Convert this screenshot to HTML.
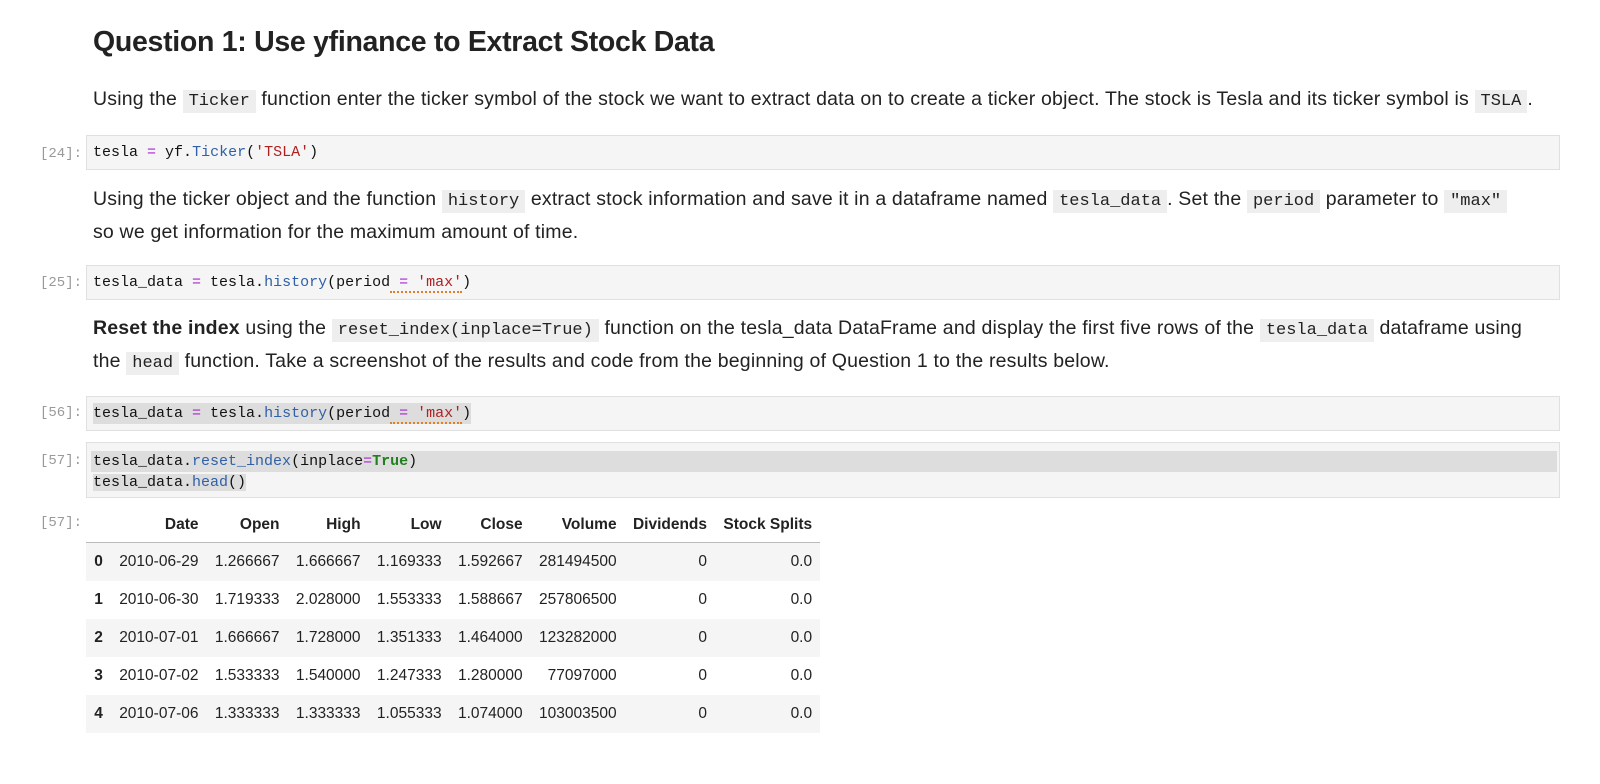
<!DOCTYPE html>
<html><head><meta charset="utf-8"><style>
body{margin:0;background:#fff;width:1600px;height:784px;overflow:hidden;font-family:"Liberation Sans",sans-serif;color:#222;}
h1{position:absolute;left:93px;top:26px;margin:0;font-size:28.5px;font-weight:bold;color:#222;letter-spacing:-0.3px}
.p{position:absolute;left:93px;font-size:19.5px;line-height:31px;white-space:nowrap;color:#222;letter-spacing:0.18px}
.c{font-family:"Liberation Mono",monospace;font-size:17px;background:#eee;padding:2px 6px;letter-spacing:0}
.cell{position:absolute;left:86px;width:1474px;background:#f5f5f5;border:1px solid #e0e0e0;box-sizing:border-box}
.code{position:absolute;left:6px;font-family:"Liberation Mono",monospace;font-size:15px;color:#111;line-height:21px;white-space:pre}
.pr{position:absolute;width:82px;text-align:right;font-family:"Liberation Mono",monospace;font-size:14px;color:#999}
.o{color:#a626d0}.f{color:#3060a8}.s{color:#b02020}.k{color:#208020;font-weight:bold}
.sq{border-bottom:2px dotted #e08020}
table{position:absolute;left:86px;top:508px;border-collapse:collapse;font-size:15.5px;color:#222}
th{font-weight:bold;text-align:right;padding:0 8.2px;height:34px;border-bottom:1px solid #bbb}
td{text-align:right;padding:0 8.2px;height:38px}
tr:nth-child(even) td{background:#f5f5f5}
td:first-child{font-weight:bold}
</style></head><body>
<h1>Question 1: Use yfinance to Extract Stock Data</h1>
<div class="p" style="top:84px">Using the <span class="c">Ticker</span> function enter the ticker symbol of the stock we want to extract data on to create a ticker object. The stock is Tesla and its ticker symbol is <span class="c">TSLA</span>.</div>

<div class="pr" style="top:146px;left:0">[24]:</div>
<div class="cell" style="top:135px;height:35px"><div class="code" style="top:6px">tesla <span class="o">=</span> yf<span>.</span><span class="f">Ticker</span>(<span class="s">'TSLA'</span>)</div></div>

<div class="p" style="top:184px">Using the ticker object and the function <span class="c">history</span> extract stock information and save it in a dataframe named <span class="c">tesla_data</span>. Set the <span class="c">period</span> parameter to <span class="c">"max"</span><br>so we get information for the maximum amount of time.</div>

<div class="pr" style="top:275px;left:0">[25]:</div>
<div class="cell" style="top:265px;height:35px"><div class="code" style="top:6px">tesla_data <span class="o">=</span> tesla.<span class="f">history</span>(period<span class="sq"> <span class="o">=</span> <span class="s">'max'</span></span>)</div></div>

<div class="p" style="top:313px"><b>Reset the index</b> using the <span class="c">reset_index(inplace=True)</span> function on the tesla_data DataFrame and display the first five rows of the <span class="c">tesla_data</span> dataframe using<br>the <span class="c">head</span> function. Take a screenshot of the results and code from the beginning of Question 1 to the results below.</div>

<div class="pr" style="top:405px;left:0">[56]:</div>
<div class="cell" style="top:396px;height:35px"><div class="code" style="top:6px;background:#ddd">tesla_data <span class="o">=</span> tesla.<span class="f">history</span>(period<span class="sq"> <span class="o">=</span> <span class="s">'max'</span></span>)</div></div>

<div class="pr" style="top:453px;left:0">[57]:</div>
<div class="cell" style="top:442px;height:56px"><div style="position:absolute;left:4px;top:8px;width:1466px;height:21px;background:#ddd"></div><div class="code" style="top:8px">tesla_data.<span class="f">reset_index</span>(inplace<span class="o">=</span><span class="k">True</span>)
<span style="background:#ddd">tesla_data.<span class="f">head</span>()</span></div></div>

<div class="pr" style="top:515px;left:0">[57]:</div>
<table>
<tr><th></th><th>Date</th><th>Open</th><th>High</th><th>Low</th><th>Close</th><th>Volume</th><th>Dividends</th><th>Stock Splits</th></tr>
<tr><td>0</td><td>2010-06-29</td><td>1.266667</td><td>1.666667</td><td>1.169333</td><td>1.592667</td><td>281494500</td><td>0</td><td>0.0</td></tr>
<tr><td>1</td><td>2010-06-30</td><td>1.719333</td><td>2.028000</td><td>1.553333</td><td>1.588667</td><td>257806500</td><td>0</td><td>0.0</td></tr>
<tr><td>2</td><td>2010-07-01</td><td>1.666667</td><td>1.728000</td><td>1.351333</td><td>1.464000</td><td>123282000</td><td>0</td><td>0.0</td></tr>
<tr><td>3</td><td>2010-07-02</td><td>1.533333</td><td>1.540000</td><td>1.247333</td><td>1.280000</td><td>77097000</td><td>0</td><td>0.0</td></tr>
<tr><td>4</td><td>2010-07-06</td><td>1.333333</td><td>1.333333</td><td>1.055333</td><td>1.074000</td><td>103003500</td><td>0</td><td>0.0</td></tr>
</table>
</body></html>
